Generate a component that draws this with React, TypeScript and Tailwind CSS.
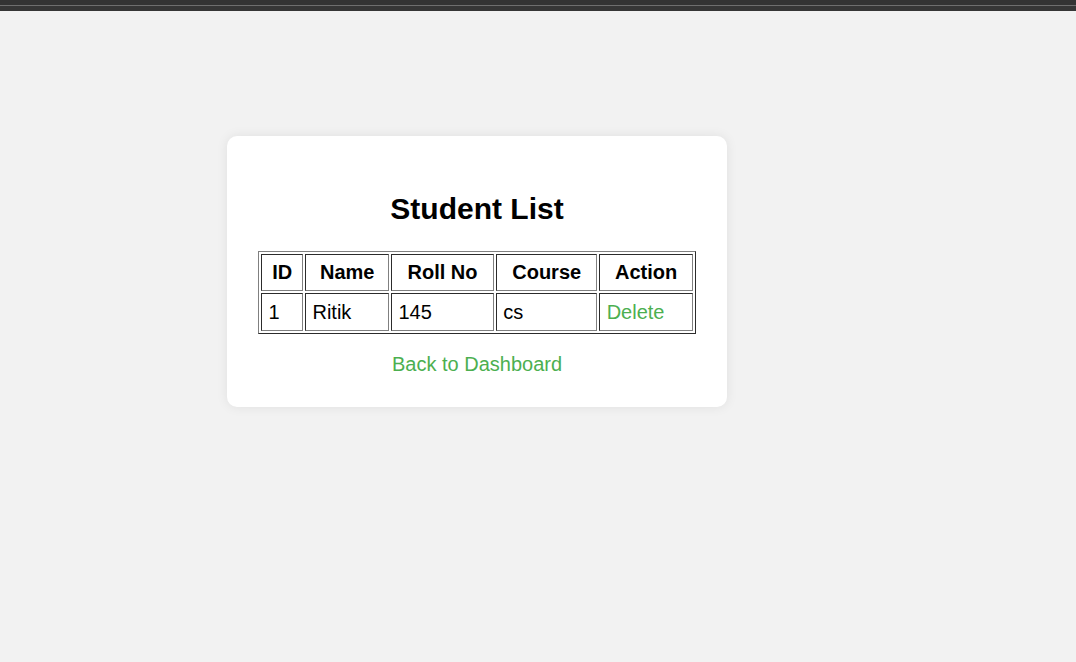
const students = [{ id: 1, name: "Ritik", roll: "145", course: "cs" }];

const heads = ["ID", "Name", "Roll No", "Course", "Action"];

export default function App() {
  return (
    <div className="min-h-screen bg-[#f2f2f2] font-['Liberation_Sans',Arial,sans-serif] text-[20px] leading-[23px] text-black">
      <div className="h-[5px] bg-[#333333]" />
      <div className="h-[1px] bg-[#6e6e6e]" />
      <div className="h-[5px] bg-[#363636]" />

      <div className="ml-[227px] mt-[125px] w-[500px] rounded-[10px] bg-white px-[31.25px] py-[31.25px] shadow-[0_0_12px_rgba(0,0,0,0.08)]">
        <h2 className="mb-[24px] mt-[25px] text-center text-[30px] font-bold leading-[34.5px]">
          Student List
        </h2>

        <table className="w-full border-separate border-spacing-[2.5px] border border-[gray] [border-style:outset]">
          <thead>
            <tr>
              {heads.map((h) => (
                <th
                  key={h}
                  className="border border-[gray] p-[6.25px] text-center font-bold [border-style:inset]"
                >
                  {h}
                </th>
              ))}
            </tr>
          </thead>
          <tbody>
            {students.map((s) => (
              <tr key={s.id}>
                <td className="border border-[gray] p-[6.25px] text-left [border-style:inset]">{s.id}</td>
                <td className="border border-[gray] p-[6.25px] text-left [border-style:inset]">{s.name}</td>
                <td className="border border-[gray] p-[6.25px] text-left [border-style:inset]">{s.roll}</td>
                <td className="border border-[gray] p-[6.25px] text-left [border-style:inset]">{s.course}</td>
                <td className="border border-[gray] p-[6.25px] text-left [border-style:inset]">
                  <a href="#" className="text-[#4caf50]">
                    Delete
                  </a>
                </td>
              </tr>
            ))}
          </tbody>
        </table>

        <div className="mt-[19px] text-center">
          <a href="#" className="text-[#4caf50]">
            Back to Dashboard
          </a>
        </div>
      </div>
    </div>
  );
}
